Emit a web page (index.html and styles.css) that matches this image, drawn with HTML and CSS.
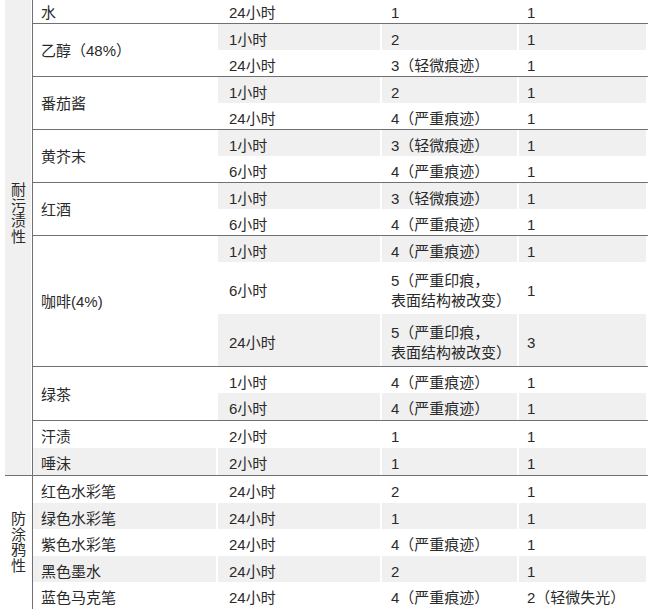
FILE: index.html
```html
<!DOCTYPE html>
<html lang="zh-CN">
<head>
<meta charset="utf-8">
<title>测试结果</title>
<link rel="stylesheet" href="styles.css">
</head>
<body>
<table class="t">
  <colgroup>
    <col class="c-cat"><col class="c-item"><col class="c-time"><col class="c-r1"><col class="c-r2">
  </colgroup>
  <tbody>
    <tr>
      <td class="cat cat-a" rowspan="16"><div class="vtext">耐污渍性</div></td>
      <td class="item">水</td><td class="time">24小时</td><td class="r1">1</td><td class="r2">1</td>
    </tr>
    <tr class="grp alt">
      <td class="item span" rowspan="2">乙醇（48%）</td><td class="time">1小时</td><td class="r1">2</td><td class="r2">1</td>
    </tr>
    <tr><td class="time">24小时</td><td class="r1">3（轻微痕迹）</td><td class="r2">1</td></tr>
    <tr class="grp alt">
      <td class="item span" rowspan="2">番茄酱</td><td class="time">1小时</td><td class="r1">2</td><td class="r2">1</td>
    </tr>
    <tr><td class="time">24小时</td><td class="r1">4（严重痕迹）</td><td class="r2">1</td></tr>
    <tr class="grp alt">
      <td class="item span" rowspan="2">黄芥末</td><td class="time">1小时</td><td class="r1">3（轻微痕迹）</td><td class="r2">1</td>
    </tr>
    <tr><td class="time">6小时</td><td class="r1">4（严重痕迹）</td><td class="r2">1</td></tr>
    <tr class="grp alt">
      <td class="item span" rowspan="2">红酒</td><td class="time">1小时</td><td class="r1">3（轻微痕迹）</td><td class="r2">1</td>
    </tr>
    <tr><td class="time">6小时</td><td class="r1">4（严重痕迹）</td><td class="r2">1</td></tr>
    <tr class="grp alt">
      <td class="item span" rowspan="3">咖啡(4%)</td><td class="time">1小时</td><td class="r1">4（严重痕迹）</td><td class="r2">1</td>
    </tr>
    <tr class="tall"><td class="time">6小时</td><td class="r1">5（严重印痕，<br>表面结构被改变）</td><td class="r2">1</td></tr>
    <tr class="tall alt"><td class="time">24小时</td><td class="r1">5（严重印痕，<br>表面结构被改变）</td><td class="r2">3</td></tr>
    <tr class="grp">
      <td class="item span" rowspan="2">绿茶</td><td class="time">1小时</td><td class="r1">4（严重痕迹）</td><td class="r2">1</td>
    </tr>
    <tr class="alt h27"><td class="time">6小时</td><td class="r1">4（严重痕迹）</td><td class="r2">1</td></tr>
    <tr class="grp h27"><td class="item">汗渍</td><td class="time">2小时</td><td class="r1">1</td><td class="r2">1</td></tr>
    <tr class="alt h27"><td class="item">唾沫</td><td class="time">2小时</td><td class="r1">1</td><td class="r2">1</td></tr>
    <tr class="grp h27">
      <td class="cat cat-b" rowspan="5"><div class="vtext">防涂鸦性</div></td>
      <td class="item">红色水彩笔</td><td class="time">24小时</td><td class="r1">2</td><td class="r2">1</td>
    </tr>
    <tr class="alt"><td class="item">绿色水彩笔</td><td class="time">24小时</td><td class="r1">1</td><td class="r2">1</td></tr>
    <tr class="h27"><td class="item">紫色水彩笔</td><td class="time">24小时</td><td class="r1">4（严重痕迹）</td><td class="r2">1</td></tr>
    <tr class="alt"><td class="item">黑色墨水</td><td class="time">24小时</td><td class="r1">2</td><td class="r2">1</td></tr>
    <tr class="h27"><td class="item">蓝色马克笔</td><td class="time">24小时</td><td class="r1">4（严重痕迹）</td><td class="r2">2（轻微失光）</td></tr>
  </tbody>
</table>
</body>
</html>
```

FILE: styles.css
```css
html, body {
  margin: 0;
  padding: 0;
  background: #fff;
  overflow: hidden;
}

.t {
  margin: -3px 0 0 5px;
  width: 643px;
  table-layout: fixed;
  border-collapse: separate;
  border-spacing: 0;
  font-family: "Liberation Sans", "Noto Sans CJK SC", sans-serif;
  font-size: 15px;
  color: #2a2a2a;
}

.c-cat { width: 27px; }
.c-item { width: 186px; }
.c-time { width: 164px; }
.c-r1 { width: 137px; }
.c-r2 { width: 129px; }

.t td {
  padding: 6px 0 0;
  line-height: 20px;
  vertical-align: middle;
  white-space: nowrap;
  background: #fff;
}

.t td.item { padding-left: 8px; border-left: 1px solid #707070; }
.t td.time { padding-left: 11px; }
.t td.r1 { padding-left: 9px; }
.t td.r2 { padding-left: 8px; }

.t tr.alt > td:not(.span) {
  background: #f0f0f0;
  box-shadow: inset -2px 0 0 #fff;
}

.t tr.grp > td { border-top: 1px solid #707070; }

.t tr.tall > td { padding-top: 9px; padding-bottom: 3px; }
.t tr.h27 > td { padding-bottom: 1px; }

.t td.span { padding-top: 3px; padding-bottom: 1px; }

.t td.cat {
  padding: 0;
  white-space: normal;
  text-align: center;
}

.t td.cat-a {
  vertical-align: top;
  padding-top: 185px;
  background: #f0f0f0;
  box-shadow: inset -1px 0 0 #fff;
}

.t td.cat-b {
  vertical-align: middle;
  padding-bottom: 6px;
}

.vtext {
  width: 15px;
  margin: 0 auto;
  line-height: 15.5px;
  word-break: break-all;
  text-align: left;
}
```
